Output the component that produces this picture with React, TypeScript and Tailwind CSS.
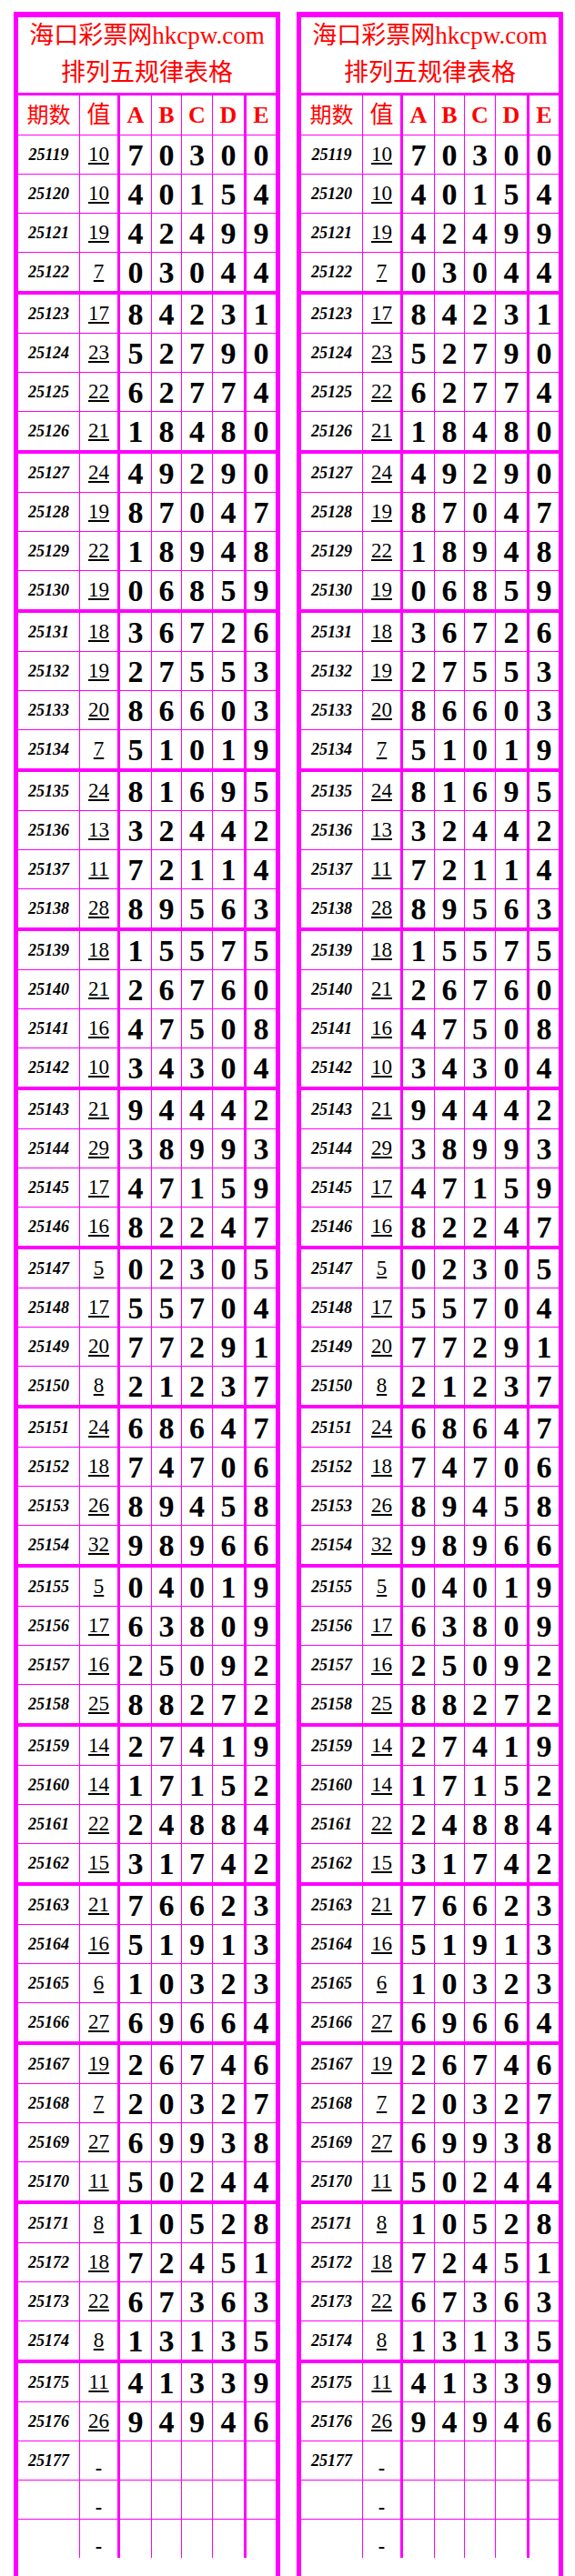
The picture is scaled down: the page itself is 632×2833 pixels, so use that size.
import React from "react";

const data: [string, string, string][] = [
  ["25119", "10", "70300"],
  ["25120", "10", "40154"],
  ["25121", "19", "42499"],
  ["25122", "7", "03044"],
  ["25123", "17", "84231"],
  ["25124", "23", "52790"],
  ["25125", "22", "62774"],
  ["25126", "21", "18480"],
  ["25127", "24", "49290"],
  ["25128", "19", "87047"],
  ["25129", "22", "18948"],
  ["25130", "19", "06859"],
  ["25131", "18", "36726"],
  ["25132", "19", "27553"],
  ["25133", "20", "86603"],
  ["25134", "7", "51019"],
  ["25135", "24", "81695"],
  ["25136", "13", "32442"],
  ["25137", "11", "72114"],
  ["25138", "28", "89563"],
  ["25139", "18", "15575"],
  ["25140", "21", "26760"],
  ["25141", "16", "47508"],
  ["25142", "10", "34304"],
  ["25143", "21", "94442"],
  ["25144", "29", "38993"],
  ["25145", "17", "47159"],
  ["25146", "16", "82247"],
  ["25147", "5", "02305"],
  ["25148", "17", "55704"],
  ["25149", "20", "77291"],
  ["25150", "8", "21237"],
  ["25151", "24", "68647"],
  ["25152", "18", "74706"],
  ["25153", "26", "89458"],
  ["25154", "32", "98966"],
  ["25155", "5", "04019"],
  ["25156", "17", "63809"],
  ["25157", "16", "25092"],
  ["25158", "25", "88272"],
  ["25159", "14", "27419"],
  ["25160", "14", "17152"],
  ["25161", "22", "24884"],
  ["25162", "15", "31742"],
  ["25163", "21", "76623"],
  ["25164", "16", "51913"],
  ["25165", "6", "10323"],
  ["25166", "27", "69664"],
  ["25167", "19", "26746"],
  ["25168", "7", "20327"],
  ["25169", "27", "69938"],
  ["25170", "11", "50244"],
  ["25171", "8", "10528"],
  ["25172", "18", "72451"],
  ["25173", "22", "67363"],
  ["25174", "8", "13135"],
  ["25175", "11", "41339"],
  ["25176", "26", "94946"],
  ["25177", "", ""],
  ["", "", ""],
  ["", "", ""],
];

const colClasses = [
  "w-[68px] border-r",
  "w-[44px] border-r-[3px]",
  "w-[35px] border-r",
  "w-[33px] border-r",
  "w-[34px] border-r",
  "w-[37px] border-r-[3px]",
  "w-[32px]",
];

const cellBase =
  "flex items-center justify-center shrink-0 h-full border-[#ff00ff]";

function rowClass(i: number, total: number) {
  if (i === total - 1) return "h-[42px]";
  if (i < 56 && i % 4 === 3) return "h-[46px] border-b-[4px]";
  return "h-[43px] border-b";
}

function Table() {
  const total = data.length;
  return (
    <div className="w-[293px] shrink-0 border-x-[5px] border-t-[6px] border-[#ff00ff] bg-white [font-family:'Liberation_Serif','Noto_Sans_CJK_SC',serif]">
      <div className="h-[86px] border-b-[3px] border-[#ff00ff] flex flex-col items-center text-[27px] leading-[41px] text-[#ff0000]">
        <div className="whitespace-nowrap">海口彩票网hkcpw.com</div>
        <div className="whitespace-nowrap">排列五规律表格</div>
      </div>
      <div className="flex h-[44px] border-b border-[#ff00ff] text-[#ff0000]">
        <div className={`${cellBase} ${colClasses[0]} text-[24px]`}>期数</div>
        <div className={`${cellBase} ${colClasses[1]} text-[26px]`}>值</div>
        {["A", "B", "C", "D", "E"].map((l, k) => (
          <div
            key={l}
            className={`${cellBase} ${colClasses[k + 2]} text-[26px] font-bold`}
          >
            {l}
          </div>
        ))}
      </div>
      {data.map(([p, v, d], i) => (
        <div
          key={i}
          className={`flex border-[#ff00ff] text-black ${rowClass(i, total)}`}
        >
          <div
            className={`${cellBase} ${colClasses[0]} text-[18px] font-bold italic`}
          >
            {p}
          </div>
          <div className={`${cellBase} ${colClasses[1]} text-[23px]`}>
            <span className="underline">{v === "" ? "\u00a0" : v}</span>
          </div>
          {[0, 1, 2, 3, 4].map((k) => (
            <div
              key={k}
              className={`${cellBase} ${colClasses[k + 2]} text-[34px] font-bold`}
            >
              {d.charAt(k)}
            </div>
          ))}
        </div>
      ))}
    </div>
  );
}

export default function App() {
  return (
    <div className="w-[632px] h-[2833px] bg-white flex gap-[18px] pl-[15px] pt-[13px]">
      <Table />
      <Table />
    </div>
  );
}
